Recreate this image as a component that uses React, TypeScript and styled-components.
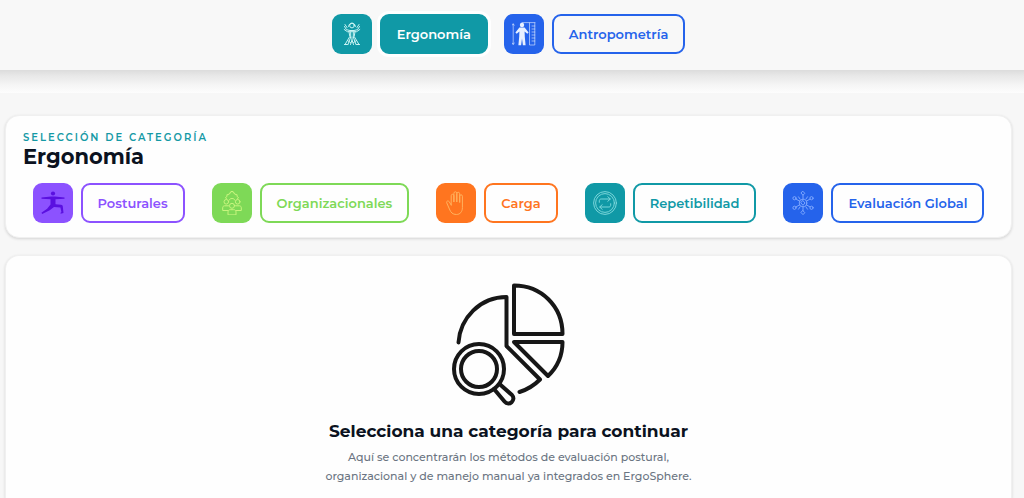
import React from 'react';
import styled, { createGlobalStyle } from 'styled-components';

const GlobalStyle = createGlobalStyle`
  *, *::before, *::after { box-sizing: border-box; }
  body {
    margin: 0;
    background: #f7f7f7;
    color: #0b1220;
    font-family: Montserrat, Inter, "Liberation Sans", sans-serif;
  }
  h1, h2, p { margin: 0; }
`;

const Page = styled.div`
  display: flex;
  flex-direction: column;
  min-height: 100vh;
`;

const Header = styled.header`
  background: #fff;
`;

const Bar = styled.nav`
  display: flex;
  flex-wrap: wrap;
  justify-content: center;
  gap: 16px;
  padding: 14px 12px 16px 5px;
  background: #f8f8f8;
`;

const BarShade = styled.div`
  height: 23px;
  background: linear-gradient(#dcdcdc, #e8e8e8 25%, #f5f5f5 65%, #fdfdfd);
`;

const Main = styled.main`
  display: flex;
  flex: 1;
  flex-direction: column;
  gap: 17px;
  padding: 22px 12px 0 5px;
`;

const Card = styled.section`
  padding: 16px 17px 14px;
  border: 1px solid #f0f0f0;
  border-radius: 14px;
  background: #fefefe;
  box-shadow: 0 1px 3px rgba(0, 0, 0, 0.14);
`;

const EmptyState = styled(Card)`
  display: flex;
  flex: 1;
  flex-direction: column;
  align-items: center;
  padding: 27px 16px 8px;
  border-bottom: 0;
  border-radius: 14px 14px 0 0;
  text-align: center;
`;

const Eyebrow = styled.p`
  color: #1499a5;
  font-size: 10px;
  font-weight: 600;
  line-height: 12px;
  letter-spacing: 2px;
  text-transform: uppercase;
`;

const Title = styled.h1`
  font-size: 21px;
  font-weight: 700;
  line-height: 26px;
`;

const Categories = styled.div`
  display: flex;
  flex-wrap: wrap;
  justify-content: center;
  gap: 12px 27px;
  margin-top: 13px;
`;

const Option = styled.div`
  display: flex;
  gap: 8px;
`;

const Tile = styled.span<{ $color: string; $ink: string }>`
  display: flex;
  align-items: center;
  justify-content: center;
  width: 40px;
  height: 40px;
  border-radius: 9px;
  background: ${(p) => p.$color};
  color: ${(p) => p.$ink};
`;

const Choice = styled.button<{ $color: string; $active?: boolean }>`
  height: 40px;
  padding: 0 15px;
  border: 2px solid ${(p) => p.$color};
  border-radius: 9px;
  background: ${(p) => (p.$active ? p.$color : 'transparent')};
  box-shadow: ${(p) => (p.$active ? '0 0 0 3px #fff' : 'none')};
  color: ${(p) => (p.$active ? '#fff' : p.$color)};
  font: inherit;
  font-size: 13px;
  font-weight: 600;
  white-space: nowrap;
  cursor: pointer;
`;

const Subtitle = styled.h2`
  margin-top: 12px;
  font-size: 17px;
  font-weight: 700;
  line-height: 24px;
`;

const Description = styled.p`
  max-width: 400px;
  margin-top: 5px;
  color: #6b7582;
  font-size: 11px;
  font-weight: 500;
  line-height: 19px;
`;

type IconProps = { children: React.ReactNode; width?: number };

const Icon = ({ children, width = 1 }: IconProps) => (
  <svg width="24" height="24" viewBox="0 0 24 24" fill="none" stroke="currentColor"
    strokeWidth={width} strokeLinecap="round" strokeLinejoin="round" aria-hidden="true">
    {children}
  </svg>
);

const BodyIcon = () => (
  <Icon>
    <circle cx="12" cy="3.6" r="2.3" />
    <path d="M8.6 4.5C8.8-.2 15.2-.2 15.4 4.5M4.5 4.5l2 3.2 3.5.8h4l3.5-.8 2-3.2M4.2 7.5l3.2 2.2h9.2l3.2-2.2M5 2.5l2 3M19 2.5l-2 3M9 9.7l.8 4.8L5 22.5M15 9.7l-.8 4.8 4.8 8M10.7 10v5L8 22.5M13.3 10v5l2.7 7.5M12 15v3l-1.5 4.5M12 18l1.5 4.5M4.5 22.5h3M16.5 22.5h3M7.5 18.5l3 2M16.5 18.5l-3 2" />
  </Icon>
);

const MeasureIcon = () => (
  <Icon>
    <circle cx="10" cy="3" r="2.2" fill="currentColor" stroke="none" />
    <path d="M7.4 5.6h5.2l4 5-1.3 1.2-2.7-2.4.2 5.3.8 8.5h-2.7L10 16.5l-.9 6.7H6.4l.8-8.5.2-5.3-2.7 2.4-1.3-1.2z" fill="currentColor" stroke="none" />
    <path d="M1.2 2v20M.2 3.2 1.2 1.8l1 1.4M.2 21l1 1.6 1-1.6M10 .6h13M17.5 1v22h5.3V1M20 4h2.8M20 7h2.8M20 10h2.8M20 13h2.8M20 16h2.8M20 19h2.8" strokeWidth=".6" />
  </Icon>
);

const PoseIcon = () => (
  <Icon>
    <circle cx="12" cy="2.5" r="2.1" fill="currentColor" stroke="none" />
    <path d="M.5 6.5 10 5.5h4l9.500 1v1.200L14.500 8.200v5l5.500.6c1.100.1 1.700.6 1.800 1.600l.7 6.700-2.900.6v-1l.8-.6-1-4.700-6.400-.4-4.300 3.300-7.500 3.600-.8-1.200 5.700-4 3.400-4.300V8.200L.5 7.700z" fill="currentColor" stroke="none" />
  </Icon>
);

const TeamIcon = () => (
  <Icon>
    <path d="M6.500 7.800 5.500 6.500l1.500-1-.1-1.800 2-.1.600-1.600h1.100l.3-1.500h2.200l.3 1.500h1.100l.6 1.600 2 .1-.1 1.800 1.500 1-1 1.300" />
    <circle cx="6.300" cy="10.800" r="2.300" />
    <circle cx="17.700" cy="10.800" r="2.300" />
    <circle cx="12" cy="14.800" r="2.500" />
    <path d="M9 9.200c.7-2.400 5.300-2.400 6 0M8.500 14.800H4.600c-1.200 0-1.900.8-1.900 2v2.700h5M15.500 14.800h3.900c1.200 0 1.900.8 1.900 2v2.700h-5M8 23.500v-2.400c0-1.500.8-2.400 2.200-2.400h3.600c1.400 0 2.200.9 2.200 2.400v2.400z" />
  </Icon>
);

const HandIcon = () => (
  <Icon>
    <path d="M7.200 14V4.700c0-1.900 2.700-1.900 2.700 0V11 2.200c0-1.900 2.900-1.900 2.900 0V11 2.700c0-1.900 2.900-1.900 2.900 0V11.500 5.200c0-1.900 2.700-1.900 2.700 0v11.500c0 4-2.300 6.800-6 6.800-3.800 0-5.600-1.900-7-5.500l-2.600-6c-.8-2 1.600-2.900 2.500-1.100L7.200 14" />
  </Icon>
);

const CycleIcon = () => (
  <Icon width={0.9}>
    <circle cx="12" cy="12" r="11.4" />
    <circle cx="12" cy="12" r="9.4" />
    <path d="M6.300 11.300V9.800c0-1 .7-1.800 1.800-1.800h9M14.800 5.700 17.300 8l-2.500 2.300M17.700 12.700v1.500c0 1-.7 1.800-1.800 1.800h-9M9.200 13.700 6.700 16l2.500 2.300" />
  </Icon>
);

const NetworkIcon = () => (
  <Icon width={0.9}>
    <circle cx="12" cy="12" r="3.8" />
    <path d="m12 9.700 2 2.300-2 2.300-2-2.300zM12 8.200V4.300M12 15.800v3.900M8.700 10.200 4.900 8M15.300 13.800l3.800 2.200M8.700 13.800 4.900 16M15.300 10.200 19.100 8M12 .4l1.800 1.900L12 4.200l-1.800-1.900zM12 19.800l1.800 1.900-1.800 1.900-1.800-1.900z" />
    <circle cx="3.500" cy="7.200" r="1.600" />
    <circle cx="20.500" cy="7.200" r="1.600" />
    <circle cx="3.500" cy="16.800" r="1.600" />
    <circle cx="20.500" cy="16.800" r="1.600" />
    <path d="M7.500 5.800 9 8M16.500 5.800 15 8M7.500 18.200 9 16M16.500 18.200 15 16" />
  </Icon>
);

const ChartSearch = () => (
  <svg width="114" height="124" viewBox="0 0 114 124" fill="none" stroke="#171717"
    strokeWidth="4" strokeLinecap="round" strokeLinejoin="round" aria-hidden="true">
    <path d="M62 2.500V51h48.500C110.500 23 89 2.500 62 2.500zM62 59h48.500c0 13-5 25-14.500 34z" />
    <path d="M6.500 59.500C8 35 28 14 54.500 14v49L88 96.500c-5.500 5.500-12.500 10-20.500 12.500" />
    <circle cx="27" cy="86" r="25" />
    <circle cx="27" cy="86" r="18" />
    <path d="m42 106 10.500 12.500c4.500 5.500 12-1.500 7.500-6.500L47.500 101" />
  </svg>
);

type Item = {
  label: string;
  color: string;
  ink: string;
  icon: React.ReactNode;
  active?: boolean;
};

const sections: Item[] = [
  { label: 'Ergonomía', color: '#1099a6', ink: '#c9f4f3', icon: <BodyIcon />, active: true },
  { label: 'Antropometría', color: '#2563eb', ink: '#e8f0ff', icon: <MeasureIcon /> },
];

const categories: Item[] = [
  { label: 'Posturales', color: '#8c52ff', ink: '#5a10e0', icon: <PoseIcon /> },
  { label: 'Organizacionales', color: '#7ed957', ink: '#c8f57e', icon: <TeamIcon /> },
  { label: 'Carga', color: '#ff751f', ink: '#ffb25e', icon: <HandIcon /> },
  { label: 'Repetibilidad', color: '#1099a6', ink: '#86dde0', icon: <CycleIcon /> },
  { label: 'Evaluación Global', color: '#2563eb', ink: '#86adff', icon: <NetworkIcon /> },
];

const OptionItem = ({ item }: { item: Item }) => (
  <Option>
    <Tile $color={item.color} $ink={item.ink}>{item.icon}</Tile>
    <Choice type="button" $color={item.color} $active={item.active}>
      {item.label}
    </Choice>
  </Option>
);

export default function App() {
  return (
    <Page>
      <GlobalStyle />
      <Header>
        <Bar>
          {sections.map((item) => <OptionItem key={item.label} item={item} />)}
        </Bar>
        <BarShade />
      </Header>
      <Main>
        <Card>
          <Eyebrow>Selección de categoría</Eyebrow>
          <Title>Ergonomía</Title>
          <Categories>
            {categories.map((item) => <OptionItem key={item.label} item={item} />)}
          </Categories>
        </Card>
        <EmptyState>
          <ChartSearch />
          <Subtitle>Selecciona una categoría para continuar</Subtitle>
          <Description>
            Aquí se concentrarán los métodos de evaluación postural, organizacional y de manejo
            manual ya integrados en ErgoSphere.
          </Description>
        </EmptyState>
      </Main>
    </Page>
  );
}
